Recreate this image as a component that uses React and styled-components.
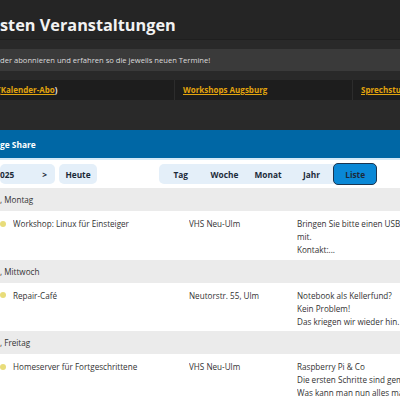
import React from "react";
import styled, { createGlobalStyle } from "styled-components";

const GlobalStyle = createGlobalStyle`
  body {
    margin: 0;
    background: #292929;
    font-family: "Open Sans", "Noto Sans", sans-serif;
  }
`;

const Page = styled.div`
  width: 400px;
  height: 400px;
  overflow: hidden;
  background: #292929;
`;

const Head = styled.div`
  height: 40px;
  box-sizing: border-box;
  padding-top: 13px;
  border-bottom: 1px solid #1f1f1f;
  background: #252525;
  h1 {
    margin: 0;
    font-size: 16.3px;
    line-height: 24px;
    font-weight: 700;
    color: #f2f2f2;
    white-space: nowrap;
  }
`;

const Notice = styled.div`
  margin-top: 9px;
  height: 22px;
  background: #3a3a3a;
  color: #dcdcdc;
  font-size: 7.6px;
  line-height: 22px;
  white-space: nowrap;
`;

const LinkRow = styled.div`
  margin-top: 9px;
  height: 20px;
  display: grid;
  grid-template-columns: 174px 178px 1fr;
  background: #1d1d1d;
  font-size: 8px;
  font-weight: 700;
  line-height: 20px;
  color: #e6e6e6;
  white-space: nowrap;
`;

const LinkCell = styled.div`
  padding-left: ${(p) => p.pad || 0}px;
  border-left: ${(p) => (p.first ? "none" : "1px solid #2c2c2c")};
  overflow: hidden;
  ${(p) => p.first && `text-indent: -2px;`}
  a {
    color: #e2a40e;
    text-decoration: underline;
  }
`;

const Calendar = styled.div`
  margin-top: 30px;
  background: #fff;
`;

const Bar = styled.div`
  height: 28px;
  background: #0067a5;
  border-bottom: 2px solid #d4e9f7;
  color: #fff;
  font-size: 8.4px;
  font-weight: 700;
  line-height: 29px;
  white-space: nowrap;
`;

const Toolbar = styled.div`
  height: 28px;
  display: flex;
  align-items: center;
  background: #fff;
`;

const Btn = styled.div`
  height: 20px;
  box-sizing: border-box;
  display: flex;
  align-items: center;
  justify-content: ${(p) => p.justify || "center"};
  width: ${(p) => p.w}px;
  margin-right: ${(p) => p.mr || 0}px;
  padding-right: ${(p) => p.pr || 0}px;
  background: #e4eff9;
  border-radius: 5px;
  color: #1c2b3a;
  font-size: 8.3px;
  font-weight: 700;
`;

const Group = styled.div`
  display: flex;
  height: 20px;
  background: #e4eff9;
  border-radius: 5px;
`;

const GroupItem = styled.div`
  width: 43.6px;
  box-sizing: border-box;
  display: flex;
  align-items: center;
  justify-content: center;
  font-size: 8.3px;
  font-weight: 700;
  color: #1c2b3a;
  border-radius: 5px;
  ${(p) =>
    p.active &&
    `
    background: #0a88d6;
    border: 1.5px solid #1b3550;
    height: 22px;
    margin-top: -1px;
  `}
`;

const DayHead = styled.div`
  height: 23px;
  background: #ebebeb;
  color: #333;
  font-size: 8.15px;
  line-height: 23px;
  white-space: nowrap;
`;

const EventRow = styled.div`
  height: 48.5px;
  box-sizing: border-box;
  padding-top: 6px;
  display: grid;
  grid-template-columns: 13px 176px 108px 1fr;
  background: #fff;
  color: #333;
  font-size: 8.15px;
  line-height: 13px;
  white-space: nowrap;
`;

const Dot = styled.span`
  width: 6px;
  height: 6px;
  margin-top: 3.5px;
  border-radius: 50%;
  background: #e8dc7a;
`;

const Cell = styled.div`
  overflow: hidden;
`;

const days = [
  {
    label: ", Montag",
    title: "Workshop: Linux für Einsteiger",
    place: "VHS Neu-Ulm",
    desc: ["Bringen Sie bitte einen USB-Stick", "mit.", "Kontakt:..."],
  },
  {
    label: ", Mittwoch",
    title: "Repair-Café",
    place: "Neutorstr. 55, Ulm",
    desc: ["Notebook als Kellerfund?", "Kein Problem!", "Das kriegen wir wieder hin."],
  },
  {
    label: ", Freitag",
    title: "Homeserver für Fortgeschrittene",
    place: "VHS Neu-Ulm",
    desc: [
      "Raspberry Pi & Co",
      "Die ersten Schritte sind gemacht.",
      "Was kann man nun alles machen?",
    ],
  },
];

export default function App() {
  return (
    <Page>
      <GlobalStyle />
      <Head>
        <h1>sten Veranstaltungen</h1>
      </Head>
      <Notice>der abonnieren und erfahren so die jeweils neuen Termine!</Notice>
      <LinkRow>
        <LinkCell first>
          (<a>Kalender-Abo</a>)
        </LinkCell>
        <LinkCell pad={8}>
          <a>Workshops Augsburg</a>
        </LinkCell>
        <LinkCell pad={8}>
          <a>Sprechstunde</a>
        </LinkCell>
      </LinkRow>
      <Calendar>
        <Bar>ge Share</Bar>
        <Toolbar>
          <Btn w={55} mr={4} pr={8} justify="space-between">
            <span>025</span>
            <span>&gt;</span>
          </Btn>
          <Btn w={38} mr={62}>
            Heute
          </Btn>
          <Group>
            {["Tag", "Woche", "Monat", "Jahr", "Liste"].map((v) => (
              <GroupItem key={v} active={v === "Liste"}>
                {v}
              </GroupItem>
            ))}
          </Group>
        </Toolbar>
        {days.map((d) => (
          <React.Fragment key={d.label}>
            <DayHead>{d.label}</DayHead>
            <EventRow>
              <Dot />
              <Cell>{d.title}</Cell>
              <Cell>{d.place}</Cell>
              <Cell>
                {d.desc.map((l) => (
                  <div key={l}>{l}</div>
                ))}
              </Cell>
            </EventRow>
          </React.Fragment>
        ))}
      </Calendar>
    </Page>
  );
}
